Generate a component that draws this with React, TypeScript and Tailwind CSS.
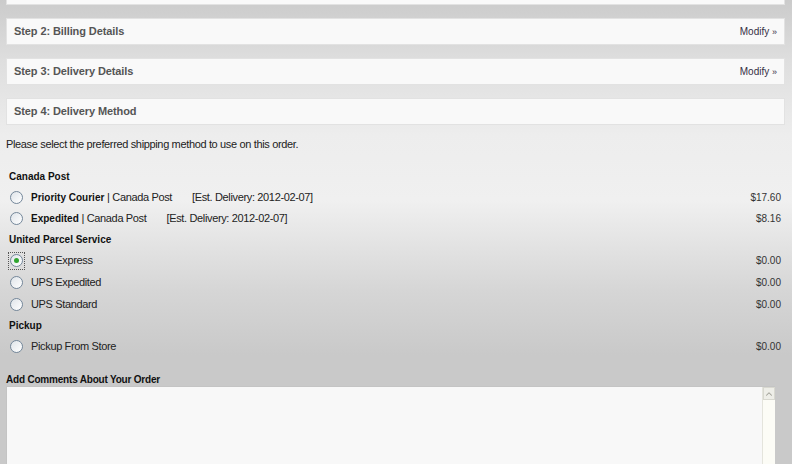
import { ChevronUp } from 'lucide-react'

interface ShippingOption {
  id: string
  title: string
  carrier?: string
  estimate?: string
  price: string
  rowClass: string
}

interface ShippingGroup {
  name: string
  options: ShippingOption[]
}

const groups: ShippingGroup[] = [
  {
    name: 'Canada Post',
    options: [
      {
        id: 'priority',
        title: 'Priority Courier',
        carrier: 'Canada Post',
        estimate: '[Est. Delivery: 2012-02-07]',
        price: '$17.60',
        rowClass: 'h-[21px]',
      },
      {
        id: 'expedited',
        title: 'Expedited',
        carrier: 'Canada Post',
        estimate: '[Est. Delivery: 2012-02-07]',
        price: '$8.16',
        rowClass: 'h-[21px]',
      },
    ],
  },
  {
    name: 'United Parcel Service',
    options: [
      { id: 'ups-express', title: 'UPS Express', price: '$0.00', rowClass: 'h-[21px]' },
      { id: 'ups-expedited', title: 'UPS Expedited', price: '$0.00', rowClass: 'h-[22px]' },
      { id: 'ups-standard', title: 'UPS Standard', price: '$0.00', rowClass: 'h-[22px]' },
    ],
  },
  {
    name: 'Pickup',
    options: [{ id: 'pickup', title: 'Pickup From Store', price: '$0.00', rowClass: 'h-[20px]' }],
  },
]

const steps = [
  { label: 'Step 2: Billing Details', modify: true },
  { label: 'Step 3: Delivery Details', modify: true },
  { label: 'Step 4: Delivery Method', modify: false },
]

const Radio = ({ checked }: { checked?: boolean }) => (
  <span
    className={`flex h-[16px] w-[15px] shrink-0 items-center justify-center ${
      checked ? 'outline outline-1 outline-dotted outline-[#555]' : ''
    }`}
  >
    <span className="flex h-[13px] w-[13px] items-center justify-center rounded-full border border-[#74879a] bg-[linear-gradient(135deg,#dfe4e9,#ffffff)]">
      {checked && <span className="h-[5px] w-[5px] rounded-full bg-[#2fa52f]" />}
    </span>
  </span>
)

export default function App() {
  const selected = 'ups-express'

  return (
    <div className="h-[464px] overflow-hidden bg-[linear-gradient(to_bottom,#cbcbcb_0px,#dedede_60px,#ededed_135px,#f0f0f0_200px,#d6d6d6_290px,#c9c9c9_355px,#c9c9c9_100%)] px-[6px] font-['Liberation_Sans',Arial,sans-serif] text-[11px] tracking-[-0.35px] text-[#222]">
      <div className="h-[5px] w-[779px] border-x border-b border-[#e2e2e2] bg-[#f9f9f9]" />

      <div className="mt-[13px] flex flex-col gap-[13px]">
        {steps.map((step) => (
          <div
            key={step.label}
            className="flex h-[27px] w-[779px] items-center justify-between border border-[#e2e2e2] bg-[#f9f9f9] pl-[7px] pr-[7px]"
          >
            <span className="text-[11px] font-bold tracking-[-0.1px] text-[#555]">{step.label}</span>
            {step.modify && (
              <span className="text-[10px] tracking-normal text-[#352f45]">
                Modify <span className="text-[9px]">»</span>
              </span>
            )}
          </div>
        ))}
      </div>

      <p className="mt-[13px] leading-[13px]">Please select the preferred shipping method to use on this order.</p>

      <div className="mt-[15px] pr-[5px]">
        {groups.map((group) => (
          <div key={group.name}>
            <div className="flex h-[21px] items-center pl-[3px] text-[10px] font-bold tracking-normal text-[#111]">
              {group.name}
            </div>
            {group.options.map((option) => (
              <div key={option.id} className={`flex items-center pl-[3px] ${option.rowClass}`}>
                <Radio checked={option.id === selected} />
                <div className="ml-[7px] flex-1 text-[#222]">
                  {option.carrier ? (
                    <>
                      <b className="text-[10px] tracking-normal text-[#111]">{option.title}</b> | {option.carrier}
                      <span className="ml-[20px]">{option.estimate}</span>
                    </>
                  ) : (
                    option.title
                  )}
                </div>
                <div className="text-right text-[10px] tracking-normal text-[#333]">{option.price}</div>
              </div>
            ))}
          </div>
        ))}
      </div>

      <p className="mt-[17px] text-[10px] font-bold leading-[13px] tracking-[-0.2px] text-[#111]">
        Add Comments About Your Order
      </p>

      <div className="flex h-[100px] w-[769px] border-l border-t border-[#c4c4c4] bg-[#f8f8f8]">
        <div className="flex-1" />
        <div className="w-[13px] border-l border-[#e4e4dc] bg-[#fcfcf6]">
          <div className="flex h-[13px] items-center justify-center border border-[#d8d8d0] bg-[#eeeee8] text-[#a0a098]">
            <ChevronUp size={10} strokeWidth={2.5} />
          </div>
        </div>
      </div>
    </div>
  )
}
